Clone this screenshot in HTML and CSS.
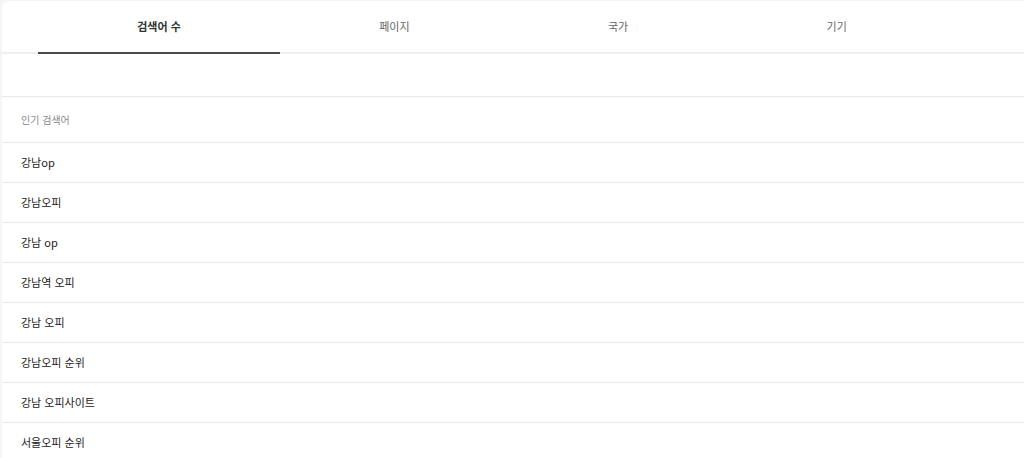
FILE: index.html
```html
<!DOCTYPE html>
<html lang="ko">
<head>
<meta charset="utf-8">
<link rel="stylesheet" href="styles.css">
</head>
<body>
<div class="card">
  <div class="tabs">
    <div class="tab active">검색어 수</div>
    <div class="tab">페이지</div>
    <div class="tab">국가</div>
    <div class="tab">기기</div>
  </div>
  <div class="blank"></div>
  <div class="label">인기 검색어</div>
  <div class="row">강남op</div>
  <div class="row">강남오피</div>
  <div class="row">강남 op</div>
  <div class="row">강남역 오피</div>
  <div class="row">강남 오피</div>
  <div class="row">강남오피 순위</div>
  <div class="row">강남 오피사이트</div>
  <div class="row">서울오피 순위</div>
</div>
</body>
</html>
```
FILE: styles.css
```css
html, body {
  margin: 0;
  padding: 0;
  background: #f3f5f8;
  overflow: hidden;
}
body {
  font-family: "Noto Sans CJK KR", "Noto Sans", sans-serif;
  color: #333;
}
.card {
  margin: 1px 0 0 2px;
  background: #fff;
  border-top-left-radius: 8px;
  min-height: 460px;
}
.tabs {
  display: flex;
  height: 51px;
  padding: 0 78px 0 36px;
  border-bottom: 2px solid #efefef;
}
.tab {
  flex: 1 1 auto;
  display: flex;
  align-items: center;
  justify-content: center;
  font-size: 11px;
  font-weight: 400;
  color: #666;
  height: 53px;
  box-sizing: border-box;
  margin-bottom: -2px;
  border-bottom: 2px solid transparent;
  padding-bottom: 1px;
}
.tab.active {
  color: #333;
  font-weight: 700;
  border-bottom-color: #4a4a4a;
}
.blank {
  height: 42px;
  border-bottom: 1px solid #e8e8e8;
}
.label {
  height: 45px;
  box-sizing: border-box;
  display: flex;
  align-items: center;
  padding: 0 0 1px 19px;
  font-size: 10px;
  color: #888;
  border-bottom: 1px solid #e8e8e8;
}
.label, .row {
  height: 46px;
}
.row {
  height: 40px;
  box-sizing: border-box;
  display: flex;
  align-items: center;
  padding: 0 0 2px 19px;
  font-size: 11px;
  font-weight: 400;
  color: #222;
  border-bottom: 1px solid #e8e8e8;
}
```
